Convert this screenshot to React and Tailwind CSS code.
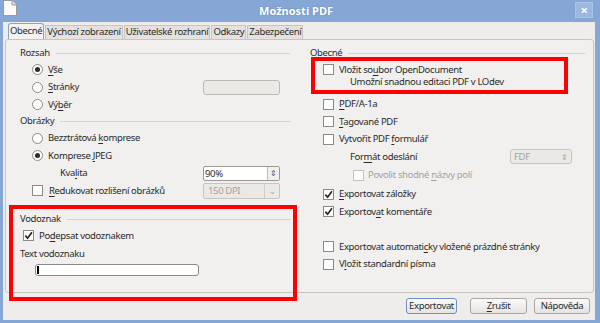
import React from "react";

const U = ({ children }) => <span className="underline underline-offset-2">{children}</span>;

function Radio({ on }) {
  return (
    <span className="w-[11px] h-[11px] rounded-full border border-[#8c8a87] bg-white flex items-center justify-center shrink-0">
      {on && <span className="w-[5px] h-[5px] rounded-full bg-[#2b2b2b]" />}
    </span>
  );
}

function Check({ on, dim }) {
  return (
    <span
      className={
        "w-[11px] h-[11px] border bg-white flex items-center justify-center shrink-0 " +
        (dim ? "border-[#c4c2bf]" : "border-[#8c8a87]")
      }
    >
      {on && (
        <svg width="9" height="9" viewBox="0 0 10 10">
          <path d="M1.5 5.2 L4 8 L8.8 1.5" fill="none" stroke="#262626" strokeWidth="1.9" />
        </svg>
      )}
    </span>
  );
}

function Group({ title }) {
  return (
    <div className="flex items-center gap-[6px] h-[16px] shrink-0">
      <span>{title}</span>
      <span className="flex-1 h-px bg-[#d6d3cf]" />
    </div>
  );
}

function Row({ children, className = "" }) {
  return <div className={"flex items-center h-[17.5px] shrink-0 " + className}>{children}</div>;
}

const tab = "h-[14px] px-[1px] border border-[#c8c5c1] border-b-0 bg-[#e4e1de] flex items-center";

export default function App() {
  return (
    <div
      className="w-[600px] h-[323px] bg-[#86a7d6] flex flex-col text-[9.5px] tracking-[-0.35px] text-[#2a2a2a] overflow-hidden"
      style={{ fontFamily: '"Noto Sans", "Open Sans", sans-serif' }}
    >
      {/* title bar */}
      <div className="h-[22px] flex items-center shrink-0">
        <svg width="14" height="16" viewBox="0 0 14 16" className="ml-[3px] -mt-[6px]">
          <path d="M0.5 0.5 H9 L13.5 5 V15.5 H0.5 Z" fill="#fbfbfb" stroke="#9a9a9a" />
          <path d="M9 0.5 V5 H13.5" fill="#e2e2e2" stroke="#9a9a9a" />
        </svg>
        <div className="flex-1 text-center font-bold text-white text-[11px] tracking-normal [text-shadow:0_0_2px_#5c7fb4]">
          Možnosti PDF
        </div>
        <div className="w-[18px] h-[16px] mr-[7px] mb-[2px] bg-[#9ab8e0] border border-[#a9c3e6] flex items-center justify-center text-white font-bold text-[13px] leading-none">
          ×
        </div>
      </div>

      {/* client area */}
      <div className="flex-1 ml-[3px] mr-[5px] mb-[3px] bg-[#efedeb] flex flex-col relative">
        {/* tabs */}
        <div className="flex items-end h-[16px] mt-[1px] pl-[5px] gap-[1px]">
          <div className="h-[16px] px-[1px] border border-[#8aa3c7] border-b-0 rounded-t-[3px] bg-[#f3f2f0] flex items-center">
            Obecné
          </div>
          <div className={tab}>Výchozí zobrazení</div>
          <div className={tab}>Uživatelské rozhraní</div>
          <div className={tab}>Odkazy</div>
          <div className={tab}>Zabezpečení</div>
        </div>

        {/* panel */}
        <div className="ml-[2px] mr-[1px] h-[254px] border border-[#c8c5c1] rounded-[3px] bg-[#f1f0ee] flex pt-[5px]">
          {/* left column */}
          <div className="w-[289px] pl-[14px] pr-[5px] flex flex-col">
            <Group title="Rozsah" />
            <div className="pl-[12px] pr-[10px]">
              <Row>
                <Radio on />
                <span className="ml-[5px]"><U>V</U>še</span>
              </Row>
              <Row>
                <Radio />
                <span className="ml-[5px] flex-1"><U>S</U>tránky</span>
                <span className="w-[77px] h-[15px] border border-[#bdbab6] rounded-[3px] bg-[#ebe9e6]" />
              </Row>
              <Row>
                <Radio />
                <span className="ml-[5px]">Vý<U>b</U>ěr</span>
              </Row>
            </div>
            <Group title="Obrázky" />
            <div className="pl-[12px] pr-[10px]">
              <Row>
                <Radio />
                <span className="ml-[5px]">Bezztrátová <U>k</U>omprese</span>
              </Row>
              <Row>
                <Radio on />
                <span className="ml-[5px]">Komprese <U>J</U>PEG</span>
              </Row>
              <Row>
                <span className="ml-[28px] flex-1">Kva<U>l</U>ita</span>
                <span className="w-[77px] h-[15px] border border-[#9c9995] rounded-[2px] bg-white flex">
                  <span className="flex-1 pl-[1px] leading-[13px]">90%</span>
                  <span className="w-[12px] border-l border-[#bdbab6] bg-[#f1f0ee] flex items-center justify-center text-[8px] text-[#555]">
                    ⇕
                  </span>
                </span>
              </Row>
              <Row>
                <Check />
                <span className="ml-[6px] flex-1"><U>R</U>edukovat rozlišení obrázků</span>
                <span className="w-[77px] h-[16px] border border-[#c8c5c1] rounded-[2px] bg-[#ebe9e6] flex text-[#a5a29e]">
                  <span className="flex-1 pl-[4px] leading-[14px]">150 DPI</span>
                  <span className="w-[15px] border-l border-[#d0cdc9] flex items-center justify-center text-[8px]">
                    ⌄
                  </span>
                </span>
              </Row>
            </div>
            <div className="h-[11.5px] shrink-0" />
            <Group title="Vodoznak" />
            <Row className="pl-[3px]">
              <Check on />
              <span className="ml-[5px]">Po<U>d</U>epsat vodoznakem</span>
            </Row>
            <div className="h-[19px] flex items-end pb-[2px] shrink-0">Text vodoznaku</div>
            <div className="ml-[15px] w-[164px] h-[12px] border border-[#8c8a87] rounded-[3px] bg-white flex items-center shrink-0">
              <span className="ml-[1px] w-[2px] h-[8px] bg-black" />
            </div>
          </div>

          {/* right column */}
          <div className="flex-1 pl-[15px] pr-[8px] flex flex-col">
            <Group title="Obecné" />
            <div className="pl-[13px]">
              <Row>
                <Check />
                <span className="ml-[5px]">Vložit so<U>u</U>bor OpenDocument</span>
              </Row>
              <div className="pl-[27px] -mt-[4px] h-[16px] flex items-center">Umožní snadnou editaci PDF v LOdev</div>
              <div className="h-[5px]" />
              <Row>
                <Check />
                <span className="ml-[5px]"><U>P</U>DF/A-1a</span>
              </Row>
              <Row>
                <Check />
                <span className="ml-[5px]"><U>T</U>agované PDF</span>
              </Row>
              <Row>
                <Check />
                <span className="ml-[5px]">Vytvořit PDF <U>f</U>ormulář</span>
              </Row>
              <Row>
                <span className="ml-[27px] flex-1">For<U>m</U>át odeslání</span>
                <span className="w-[62px] h-[15px] border border-[#c8c5c1] rounded-[3px] bg-[#ebe9e6] flex mr-[13px] text-[#a5a29e]">
                  <span className="flex-1 pl-[3px] leading-[13px]">FDF</span>
                  <span className="w-[14px] flex items-center justify-center text-[8px]">⇕</span>
                </span>
              </Row>
              <div className="pl-[30px] h-[20px] flex items-center text-[#a5a29e]">
                <Check dim />
                <span className="ml-[4px]">Povolit shodné <U>n</U>ázvy polí</span>
              </div>
              <Row>
                <Check on />
                <span className="ml-[5px]"><U>E</U>xportovat záložky</span>
              </Row>
              <Row>
                <Check on />
                <span className="ml-[5px]">Exportov<U>a</U>t komentáře</span>
              </Row>
              <div className="h-[17.5px]" />
              <Row>
                <Check />
                <span className="ml-[5px]">Exportovat automati<U>c</U>ky vložené prázdné stránky</span>
              </Row>
              <Row>
                <Check />
                <span className="ml-[5px]">V<U>l</U>ožit standardní písma</span>
              </Row>
            </div>
          </div>
        </div>

        {/* buttons */}
        <div className="flex justify-end mt-[5px] mr-[5px]">
          <div className="w-[51px] h-[16px] border border-[#6f8fbe] rounded-[3px] bg-gradient-to-b from-[#fafafa] to-[#e6e4e1] flex items-center justify-center">
            Exportovat
          </div>
          <div className="ml-[13px] w-[57px] h-[16px] border border-[#aaa7a3] rounded-[3px] bg-gradient-to-b from-[#fafafa] to-[#e6e4e1] flex items-center justify-center">
            <span><U>Z</U>rušit</span>
          </div>
          <div className="ml-[7px] w-[56px] h-[16px] border border-[#aaa7a3] rounded-[3px] bg-gradient-to-b from-[#fafafa] to-[#e6e4e1] flex items-center justify-center">
            Nápověda
          </div>
        </div>

        {/* red annotation frames */}
        <div className="absolute left-[6px] top-[183px] w-[288px] h-[96px] border-[4px] border-[#ff0000]" />
        <div className="absolute left-[308px] top-[35px] w-[257px] h-[37px] border-[4px] border-[#ff0000]" />
      </div>
    </div>
  );
}
